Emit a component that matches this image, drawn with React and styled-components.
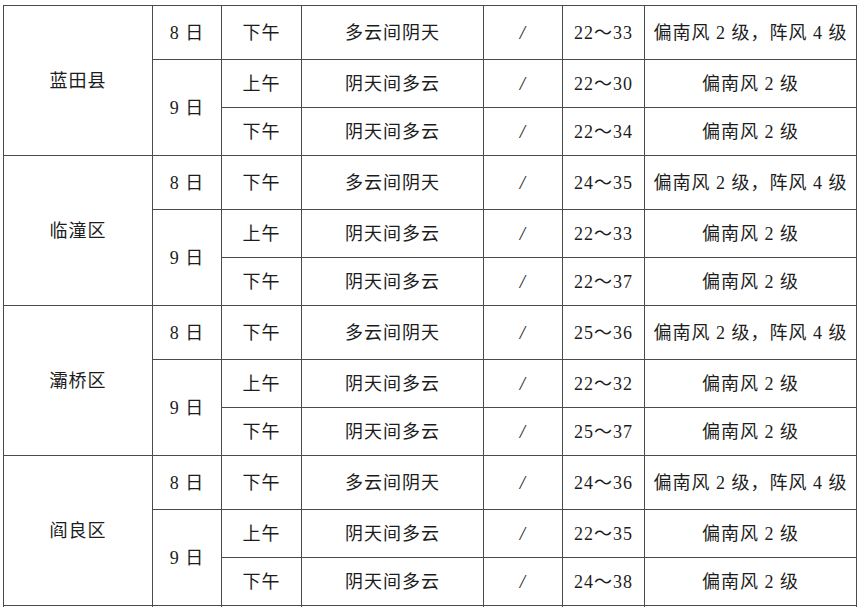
import styled, { createGlobalStyle } from "styled-components";

const GlobalStyle = createGlobalStyle`
  html, body {
    margin: 0;
    padding: 0;
    background: #ffffff;
  }
`;

const districts = [
  {
    name: "蓝田县",
    rows: [
      ["8 日", "下午", "多云间阴天", "/", "22～33", "偏南风 2 级，阵风 4 级"],
      ["9 日", "上午", "阴天间多云", "/", "22～30", "偏南风 2 级"],
      [null, "下午", "阴天间多云", "/", "22～34", "偏南风 2 级"],
    ],
  },
  {
    name: "临潼区",
    rows: [
      ["8 日", "下午", "多云间阴天", "/", "24～35", "偏南风 2 级，阵风 4 级"],
      ["9 日", "上午", "阴天间多云", "/", "22～33", "偏南风 2 级"],
      [null, "下午", "阴天间多云", "/", "22～37", "偏南风 2 级"],
    ],
  },
  {
    name: "灞桥区",
    rows: [
      ["8 日", "下午", "多云间阴天", "/", "25～36", "偏南风 2 级，阵风 4 级"],
      ["9 日", "上午", "阴天间多云", "/", "22～32", "偏南风 2 级"],
      [null, "下午", "阴天间多云", "/", "25～37", "偏南风 2 级"],
    ],
  },
  {
    name: "阎良区",
    rows: [
      ["8 日", "下午", "多云间阴天", "/", "24～36", "偏南风 2 级，阵风 4 级"],
      ["9 日", "上午", "阴天间多云", "/", "22～35", "偏南风 2 级"],
      [null, "下午", "阴天间多云", "/", "24～38", "偏南风 2 级"],
    ],
  },
];

const colWidths = [149, 69, 80, 182, 79, 82, 212];
const rowHeights = [54, 48, 48];

const Page = styled.div`
  height: 607px;
  overflow: hidden;
  padding: 5px 0 0 3px;
  box-sizing: border-box;
`;

const Table = styled.table`
  border-collapse: collapse;
  table-layout: fixed;
  width: 853px;
  font-family: "Liberation Serif", "Noto Sans CJK SC", serif;
  font-size: 18px;
  letter-spacing: 1px;
  color: #1c1c1c;
`;

const Row = styled.tr`
  height: ${(p) => p.$h}px;
`;

const Cell = styled.td`
  border: 1px solid #4a4a4a;
  padding: 0;
  text-align: center;
  vertical-align: middle;
  white-space: nowrap;
  line-height: 1;
`;

const Slash = styled.span`
  font-size: 19px;
  font-style: italic;
`;

export default function App() {
  return (
    <Page>
      <GlobalStyle />
      <Table>
        <colgroup>
          {colWidths.map((w, i) => (
            <col key={i} style={{ width: w }} />
          ))}
        </colgroup>
        <tbody>
          {districts.map((d) =>
            d.rows.map((r, i) => (
              <Row key={d.name + i} $h={rowHeights[i]}>
                {i === 0 && <Cell rowSpan={3}>{d.name}</Cell>}
                {i === 0 && <Cell>{r[0]}</Cell>}
                {i === 1 && <Cell rowSpan={2}>{r[0]}</Cell>}
                {r.slice(1).map((v, j) => (
                  <Cell key={j}>{v === "/" ? <Slash>{v}</Slash> : v}</Cell>
                ))}
              </Row>
            ))
          )}
          <Row $h={54}>
            {colWidths.map((_, i) => (
              <Cell key={i} />
            ))}
          </Row>
        </tbody>
      </Table>
    </Page>
  );
}
